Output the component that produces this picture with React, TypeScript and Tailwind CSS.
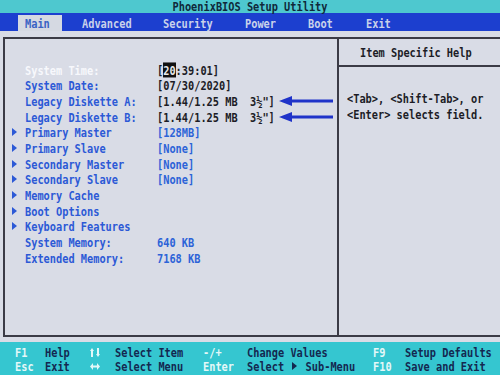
import React from "react";

type Row = {
  label: string;
  value?: React.ReactNode;
  sub?: boolean;
  active?: boolean;
  valueBlue?: boolean;
  arrow?: boolean;
};

function Tri({ className = "" }: { className?: string }) {
  return (
    <svg width="5" height="8" viewBox="0 0 5 8" className={className}>
      <polygon points="0,0 5,4 0,8" fill="currentColor" />
    </svg>
  );
}

function LeftArrow() {
  return (
    <svg width="54" height="10" viewBox="0 0 54 10" className="ml-[4px] text-[#1f33c9]">
      <polygon points="0,5 13,0 13,3.5 54,3.5 54,6.5 13,6.5 13,10" fill="currentColor" />
    </svg>
  );
}

// small up/down and left/right key glyphs of the footer
function UpDown() {
  return (
    <svg width="10" height="9" viewBox="0 0 10 9" fill="currentColor">
      <polygon points="2,0 4,3 3,3 3,9 1,9 1,3 0,3" />
      <polygon points="8,9 10,6 9,6 9,0 7,0 7,6 6,6" />
    </svg>
  );
}

function LeftRight() {
  return (
    <svg width="10" height="7" viewBox="0 0 10 7" fill="currentColor">
      <polygon points="0,3.5 3,0 3,2.5 7,2.5 7,0 10,3.5 7,7 7,4.5 3,4.5 3,7" />
    </svg>
  );
}

const rows: Row[] = [
  {
    label: "System Time:",
    active: true,
    value: (
      <>
        [<span className="bg-[#111] text-[#e8e8e8]">20</span>:39:01]
      </>
    ),
  },
  { label: "System Date:", value: "[07/30/2020]" },
  { label: "Legacy Diskette A:", value: "[1.44/1.25 MB  3½\"]", arrow: true },
  { label: "Legacy Diskette B:", value: "[1.44/1.25 MB  3½\"]", arrow: true },
  { label: "Primary Master", value: "[128MB]", sub: true, valueBlue: true },
  { label: "Primary Slave", value: "[None]", sub: true, valueBlue: true },
  { label: "Secondary Master", value: "[None]", sub: true, valueBlue: true },
  { label: "Secondary Slave", value: "[None]", sub: true, valueBlue: true },
  { label: "Memory Cache", sub: true },
  { label: "Boot Options", sub: true },
  { label: "Keyboard Features", sub: true },
  { label: "System Memory:", value: "640 KB", valueBlue: true },
  { label: "Extended Memory:", value: "7168 KB", valueBlue: true },
];

const tabs = [
  { name: "Advanced", w: "w-[81px]" },
  { name: "Security", w: "w-[82px]" },
  { name: "Power", w: "w-[63px]" },
  { name: "Boot", w: "w-[58px]" },
  { name: "Exit", w: "w-[60px]" },
];

export default function App() {
  return (
    <div className="w-[500px] h-[375px] flex flex-col overflow-hidden bg-[#d9dce6] font-['DejaVu_Sans_Mono',monospace] font-bold text-[10.3px] leading-none whitespace-pre">
      {/* title */}
      <div className="h-[13px] bg-[#4ec8cf] flex items-center justify-center text-[#10283a]">
        <span className="scale-y-125">PhoenixBIOS Setup Utility</span>
      </div>

      {/* menu bar */}
      <div className="h-[18px] bg-[#1c3fcf] flex items-end text-[#c9d2ea]">
        <div className="ml-[18px] w-[44px] h-[16px] bg-[#d5d9e2] text-[#3a62c4] flex items-center pl-[7px]">
          <span className="scale-y-125">Main</span>
        </div>
        <div className="ml-[20px] flex h-[16px] items-center">
          {tabs.map((t) => (
            <div key={t.name} className={t.w}>
              <span className="inline-block scale-y-125">{t.name}</span>
            </div>
          ))}
        </div>
      </div>

      {/* main panel, its right edge runs off the screen */}
      <div className="flex-1 pt-[6px] pb-[5px] pl-[3px]">
        <div className="h-full border-2 border-r-0 border-[#3b3b46] flex">
          <div className="w-[334px] border-r-2 border-[#3b3b46] pt-[23px] pl-[7px]">
            {rows.map((r) => (
              <div key={r.label} className="h-[15.67px] flex items-center">
                <div className="w-[13px] flex items-center text-[#2c59d6]">
                  {r.sub && <Tri />}
                </div>
                <div
                  className={`w-[132px] ${r.active ? "text-[#f7f8fc]" : "text-[#2c59d6]"}`}
                >
                  <span className="inline-block scale-y-125">{r.label}</span>
                </div>
                {r.value && (
                  <div className={r.valueBlue ? "text-[#2c63d8]" : "text-[#1c1c26]"}>
                    <span className="inline-block scale-y-125">{r.value}</span>
                  </div>
                )}
                {r.arrow && <LeftArrow />}
              </div>
            ))}
          </div>

          <div className="flex-1 flex flex-col">
            <div className="h-[28px] border-b-2 border-[#3b3b46] flex items-center pl-[21px] text-[#1c1c26]">
              <span className="scale-y-125">Item Specific Help</span>
            </div>
            <div className="pt-[23px] pl-[8px] text-[#1c1c26]">
              <div className="h-[16px] flex items-center">
                <span className="scale-y-125">{"<Tab>, <Shift-Tab>, or"}</span>
              </div>
              <div className="h-[16px] flex items-center">
                <span className="scale-y-125">{"<Enter> selects field."}</span>
              </div>
            </div>
          </div>
        </div>
      </div>

      {/* footer */}
      <div className="h-[33px] bg-[#35c6d0] pt-[3px] pl-[15px]">
        <div className="h-[14px] flex items-center">
          <span className="w-[30px] text-[#e4f8f8] inline-block scale-y-125">F1</span>
          <span className="w-[45px] text-[#142850] inline-block scale-y-125">Help</span>
          <span className="w-[25px] text-[#e4f8f8] flex items-center">
            <UpDown />
          </span>
          <span className="w-[88px] text-[#142850] inline-block scale-y-125">Select Item</span>
          <span className="w-[44px] text-[#e4f8f8] inline-block scale-y-125">-/+</span>
          <span className="w-[126px] text-[#142850] inline-block scale-y-125">Change Values</span>
          <span className="w-[32px] text-[#e4f8f8] inline-block scale-y-125">F9</span>
          <span className="text-[#142850] inline-block scale-y-125">Setup Defaults</span>
        </div>
        <div className="h-[14px] flex items-center">
          <span className="w-[30px] text-[#e4f8f8] inline-block scale-y-125">Esc</span>
          <span className="w-[45px] text-[#142850] inline-block scale-y-125">Exit</span>
          <span className="w-[25px] text-[#e4f8f8] flex items-center">
            <LeftRight />
          </span>
          <span className="w-[88px] text-[#142850] inline-block scale-y-125">Select Menu</span>
          <span className="w-[44px] text-[#e4f8f8] inline-block scale-y-125">Enter</span>
          <span className="w-[126px] text-[#142850] flex items-center">
            <span className="inline-block scale-y-125">Select </span>
            <Tri className="mx-[2px]" />
            <span className="inline-block scale-y-125"> Sub-Menu</span>
          </span>
          <span className="w-[32px] text-[#e4f8f8] inline-block scale-y-125">F10</span>
          <span className="text-[#142850] inline-block scale-y-125">Save and Exit</span>
        </div>
      </div>
    </div>
  );
}
